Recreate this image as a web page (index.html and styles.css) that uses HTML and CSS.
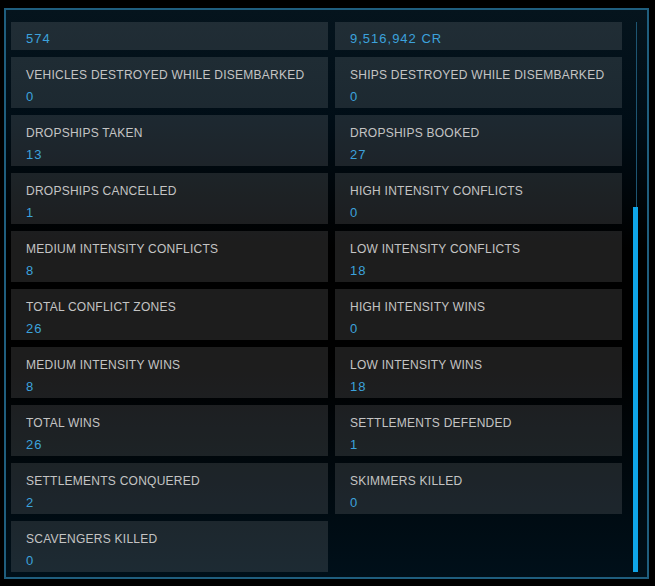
FILE: index.html
```html
<!DOCTYPE html>
<html lang="en">

<head>
    <meta charset="UTF-8">
    <title>Combat Statistics</title>
    <link rel="stylesheet" href="styles.css">
</head>

<body>
    <div class="frame">
        <div class="viewport">
            <div class="stats">
                <!-- first row is scrolled up, only the values show -->
                <div class="stat partial"><p class="value">574</p></div>
                <div class="stat partial"><p class="value">9,516,942 CR</p></div>
                <div class="stat"><p class="label">VEHICLES DESTROYED WHILE DISEMBARKED</p><p class="value">0</p></div>
                <div class="stat"><p class="label">SHIPS DESTROYED WHILE DISEMBARKED</p><p class="value">0</p></div>
                <div class="stat"><p class="label">DROPSHIPS TAKEN</p><p class="value">13</p></div>
                <div class="stat"><p class="label">DROPSHIPS BOOKED</p><p class="value">27</p></div>
                <div class="stat"><p class="label">DROPSHIPS CANCELLED</p><p class="value">1</p></div>
                <div class="stat"><p class="label">HIGH INTENSITY CONFLICTS</p><p class="value">0</p></div>
                <div class="stat"><p class="label">MEDIUM INTENSITY CONFLICTS</p><p class="value">8</p></div>
                <div class="stat"><p class="label">LOW INTENSITY CONFLICTS</p><p class="value">18</p></div>
                <div class="stat"><p class="label">TOTAL CONFLICT ZONES</p><p class="value">26</p></div>
                <div class="stat"><p class="label">HIGH INTENSITY WINS</p><p class="value">0</p></div>
                <div class="stat"><p class="label">MEDIUM INTENSITY WINS</p><p class="value">8</p></div>
                <div class="stat"><p class="label">LOW INTENSITY WINS</p><p class="value">18</p></div>
                <div class="stat"><p class="label">TOTAL WINS</p><p class="value">26</p></div>
                <div class="stat"><p class="label">SETTLEMENTS DEFENDED</p><p class="value">1</p></div>
                <div class="stat"><p class="label">SETTLEMENTS CONQUERED</p><p class="value">2</p></div>
                <div class="stat"><p class="label">SKIMMERS KILLED</p><p class="value">0</p></div>
                <div class="stat"><p class="label">SCAVENGERS KILLED</p><p class="value">0</p></div>
            </div>
        </div>
        <div class="scrollbar">
            <div class="thumb"></div>
        </div>
    </div>
</body>

</html>
```

FILE: styles.css
```css
body {
    margin: 0;
    padding: 8px 6px 7px 4px;
    background-color: #000;
    font-family: "Liberation Sans", Arial, sans-serif;
}

.frame {
    box-sizing: border-box;
    display: flex;
    height: 571px;
    padding: 12px 9px 5px 5px;
    border: 2px solid #1f5e7e;
    background: linear-gradient(to bottom, #05141d 0%, #000d16 20%, #000 42%, #000 62%, #00101a 100%);
}

.viewport {
    width: 611px;
    height: 550px;
    overflow: hidden;
}

.stats {
    display: grid;
    grid-template-columns: 317px 287px;
    grid-template-rows: 28px;
    grid-auto-rows: 51px;
    gap: 7px;
}

.stat {
    box-sizing: border-box;
    padding: 11px 15px 0;
    background-color: rgba(255, 255, 255, 0.115);
}

.stat.partial {
    padding-top: 9px;
}

.stat.partial .value {
    margin-top: 0;
}

.label {
    margin: 0;
    font-size: 12px;
    line-height: 14px;
    letter-spacing: 0.25px;
    color: #c4c4c4;
    white-space: nowrap;
}

.value {
    margin: 7px 0 0;
    font-size: 13px;
    line-height: 16px;
    letter-spacing: 1px;
    color: #3ca2dc;
}

.scrollbar {
    display: flex;
    flex-direction: column;
    justify-content: flex-end;
    width: 5px;
    height: 550px;
    margin-left: 11px;
    background: linear-gradient(to right, transparent 3px, #1d5572 3px, #1d5572 4px, transparent 4px);
}

.thumb {
    height: 365px;
    background-color: #0fa5e8;
}
```
